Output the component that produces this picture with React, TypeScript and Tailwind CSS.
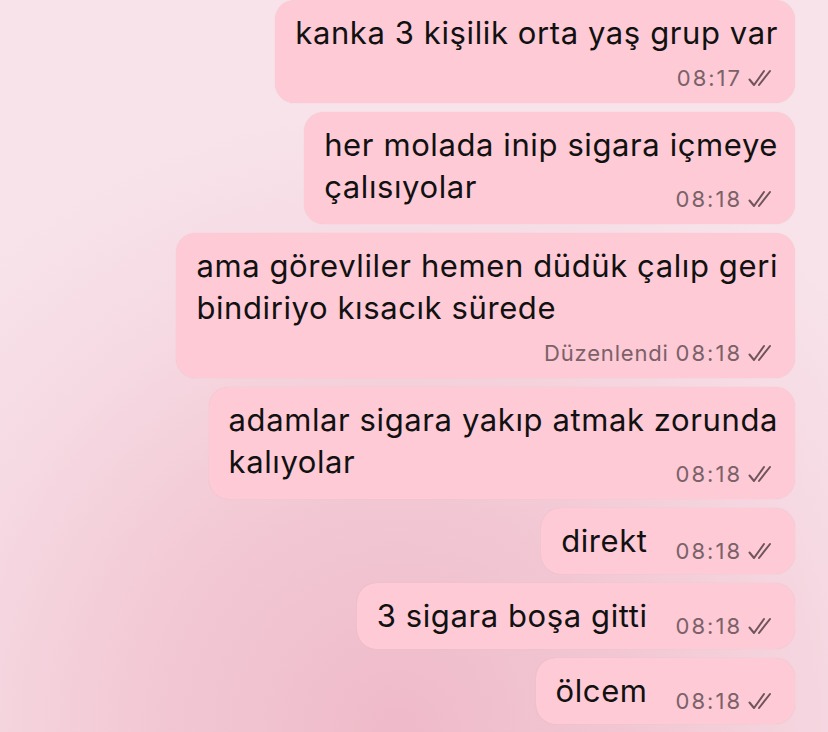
import React from 'react';

type Msg = {
  lines: string[];
  time: string;
  edited?: boolean;
  layout: 'inline' | 'below' | 'overlap';
};

const messages: Msg[] = [
  { lines: ['kanka 3 kişilik orta yaş grup var'], time: '08:17', layout: 'below' },
  { lines: ['her molada inip sigara içmeye', 'çalısıyolar'], time: '08:18', layout: 'overlap' },
  { lines: ['ama görevliler hemen düdük çalıp geri', 'bindiriyo kısacık sürede'], time: '08:18', edited: true, layout: 'below' },
  { lines: ['adamlar sigara yakıp atmak zorunda', 'kalıyolar'], time: '08:18', layout: 'overlap' },
  { lines: ['direkt'], time: '08:18', layout: 'inline' },
  { lines: ['3 sigara boşa gitti'], time: '08:18', layout: 'inline' },
  { lines: ['ölcem'], time: '08:18', layout: 'inline' },
];

const ReadTicks: React.FC = () => (
  <svg width="30" height="18" viewBox="0 0 30 18" fill="none" className="ml-[6px] shrink-0">
    <path d="M1.5 10.5 L6 16 L16 2" stroke="#6f545b" strokeWidth="2" strokeLinecap="round" strokeLinejoin="round" />
    <path d="M11 16 L22 2" stroke="#6f545b" strokeWidth="2" strokeLinecap="round" />
  </svg>
);

const Meta: React.FC<{ time: string; edited?: boolean }> = ({ time, edited }) => (
  <div className="flex items-center text-[22px] leading-[24px] text-[#7b6168] whitespace-nowrap">
    {edited && <span className="mr-[7px] tracking-[0.8px]">Düzenlendi</span>}
    <span className="tracking-[2px]">{time}</span>
    <ReadTicks />
  </div>
);

const Bubble: React.FC<{ msg: Msg }> = ({ msg }) => {
  const text = (
    <div className="text-[31px] leading-[42px] tracking-[0.6px] text-[#111] whitespace-nowrap">
      {msg.lines.map((l, i) => (
        <div key={i}>{l}</div>
      ))}
    </div>
  );

  if (msg.layout === 'inline') {
    return (
      <div className="flex items-end rounded-[20px] bg-[#fdcad6] pl-[20px] pr-[17px] pt-[12px] pb-[12px] shadow-[0_0_1px_rgba(190,120,140,0.25)]">
        {text}
        <div className="ml-[28px] mb-[-1px]">
          <Meta time={msg.time} edited={msg.edited} />
        </div>
      </div>
    );
  }

  return (
    <div className="flex flex-col rounded-[20px] bg-[#fdcad6] pl-[20px] pr-[17px] pt-[12px] pb-[13px] shadow-[0_0_1px_rgba(190,120,140,0.25)]">
      {text}
      <div className={msg.layout === 'overlap' ? 'self-end -mt-[21px]' : 'self-end mt-[12px]'}>
        <Meta time={msg.time} edited={msg.edited} />
      </div>
    </div>
  );
};

export default function App() {
  return (
    <div
      className="w-[828px] h-[732px] overflow-hidden bg-[radial-gradient(ellipse_75%_85%_at_48%_100%,#efbac9_0%,#f2c8d4_40%,#f6dae3_75%,#f8e3ea_100%)]"
      style={{ fontFamily: 'Inter, "Noto Sans", "Liberation Sans", sans-serif' }}
    >
      <div className="flex flex-col items-end gap-[9px] pr-[33px] pt-0">
        {messages.map((m, i) => (
          <Bubble key={i} msg={m} />
        ))}
      </div>
    </div>
  );
}
